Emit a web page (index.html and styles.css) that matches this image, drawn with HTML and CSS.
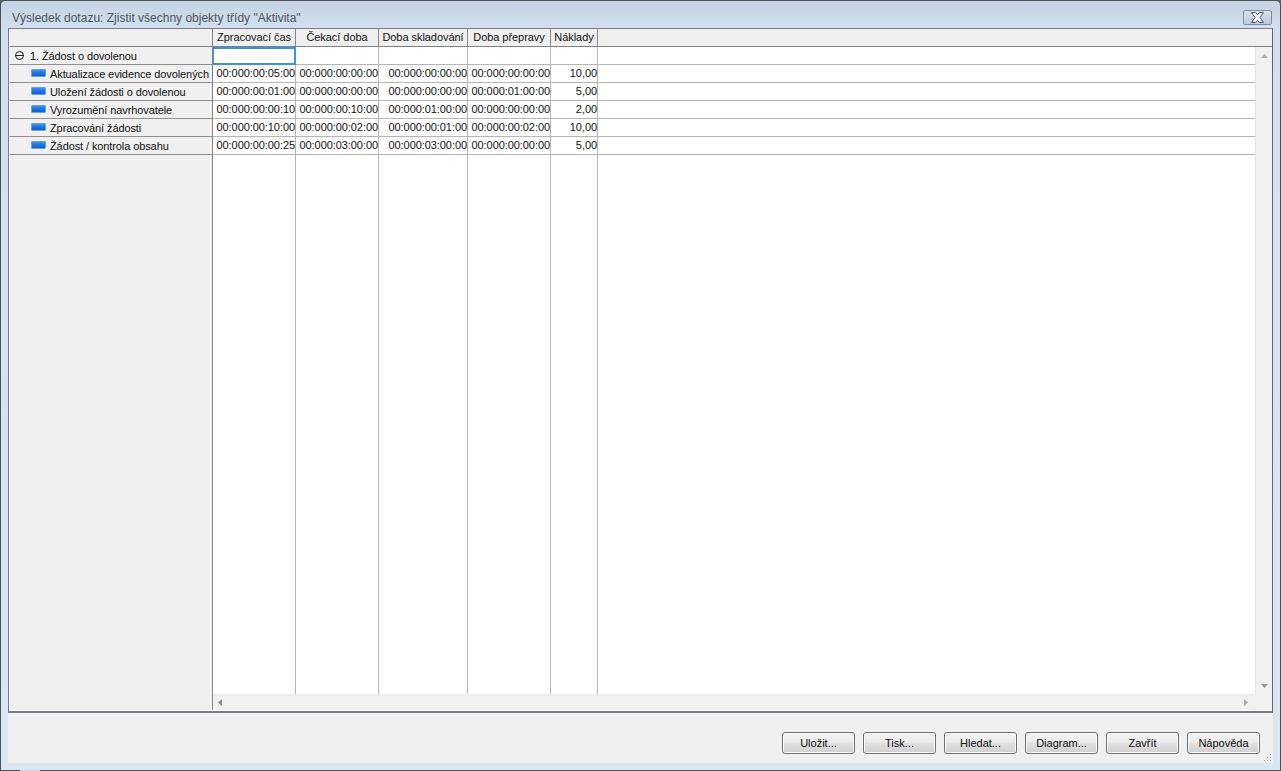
FILE: index.html
```html
<!DOCTYPE html>
<html lang="cs">
<head>
<meta charset="utf-8">
<title>Výsledek dotazu</title>
<link rel="stylesheet" href="styles.css">
</head>
<body>
<div class="window">
  <div class="titlebar">
    <span class="title">Výsledek dotazu: Zjistit všechny objekty třídy "Aktivita"</span>
    <button class="close" aria-label="Zavřít">
      <svg width="17" height="11" viewBox="0 0 17 11"><path d="M2.500 .5h4l2 2 2-2h4l-3.500 5 3.500 5h-4l-2-2-2 2h-4L6 5.500z" fill="#f2f4f6" stroke="#4f5b69" stroke-width="1"/></svg>
    </button>
  </div>
  <div class="grid">
    <div class="table">
      <div class="row head">
        <div class="stub"></div>
        <div class="cell">Zpracovací čas</div>
        <div class="cell">Čekací doba</div>
        <div class="cell">Doba skladování</div>
        <div class="cell">Doba přepravy</div>
        <div class="cell">Náklady</div>
        <div class="cell last"></div>
      </div>
      <div class="row">
        <div class="stub group"><svg class="toggle" width="9" height="9" viewBox="0 0 9 9"><circle cx="4.500" cy="4.500" r="4" fill="none" stroke="#222"/><path d="M0 4.500h9" stroke="#222"/></svg>1. Žádost o dovolenou</div>
        <div class="cell selected"></div>
        <div class="cell"></div><div class="cell"></div><div class="cell"></div><div class="cell"></div>
        <div class="cell last"></div>
      </div>
      <div class="row">
        <div class="stub item"><i class="activity"></i>Aktualizace evidence dovolených</div>
        <div class="cell num">00:000:00:05:00</div><div class="cell num">00:000:00:00:00</div><div class="cell num">00:000:00:00:00</div><div class="cell num">00:000:00:00:00</div><div class="cell num">10,00</div><div class="cell last"></div>
      </div>
      <div class="row">
        <div class="stub item"><i class="activity"></i>Uložení žádosti o dovolenou</div>
        <div class="cell num">00:000:00:01:00</div><div class="cell num">00:000:00:00:00</div><div class="cell num">00:000:00:00:00</div><div class="cell num">00:000:01:00:00</div><div class="cell num">5,00</div><div class="cell last"></div>
      </div>
      <div class="row">
        <div class="stub item"><i class="activity"></i>Vyrozumění navrhovatele</div>
        <div class="cell num">00:000:00:00:10</div><div class="cell num">00:000:00:10:00</div><div class="cell num">00:000:01:00:00</div><div class="cell num">00:000:00:00:00</div><div class="cell num">2,00</div><div class="cell last"></div>
      </div>
      <div class="row">
        <div class="stub item"><i class="activity"></i>Zpracování žádosti</div>
        <div class="cell num">00:000:00:10:00</div><div class="cell num">00:000:00:02:00</div><div class="cell num">00:000:00:01:00</div><div class="cell num">00:000:00:02:00</div><div class="cell num">10,00</div><div class="cell last"></div>
      </div>
      <div class="row">
        <div class="stub item"><i class="activity"></i>Žádost / kontrola obsahu</div>
        <div class="cell num">00:000:00:00:25</div><div class="cell num">00:000:03:00:00</div><div class="cell num">00:000:03:00:00</div><div class="cell num">00:000:00:00:00</div><div class="cell num">5,00</div><div class="cell last"></div>
      </div>
      <div class="row filler">
        <div class="stub"></div>
        <div class="cell"></div><div class="cell"></div><div class="cell"></div><div class="cell"></div><div class="cell"></div>
        <div class="cell last"></div>
      </div>
      <div class="row hbar">
        <div class="stub"></div>
        <div class="hscroll">
          <svg width="4" height="7" viewBox="0 0 4 7"><path d="M4 0v7L0 3.500z" fill="#8a8a8a"/></svg>
          <svg width="4" height="7" viewBox="0 0 4 7"><path d="M0 0v7l4-3.500z" fill="#ababab"/></svg>
        </div>
      </div>
    </div>
    <div class="vscroll">
      <div class="head-corner"></div>
      <div class="vtrack">
        <svg width="7" height="4" viewBox="0 0 7 4"><path d="M0 4h7L3.500 0z" fill="#b0b0b0"/></svg>
        <svg width="7" height="4" viewBox="0 0 7 4"><path d="M0 0h7L3.500 4z" fill="#9a9a9a"/></svg>
      </div>
      <div class="corner"></div>
    </div>
  </div>
  <div class="footer">
    <button class="btn">Uložit...</button>
    <button class="btn">Tisk...</button>
    <button class="btn">Hledat...</button>
    <button class="btn">Diagram...</button>
    <button class="btn">Zavřít</button>
    <button class="btn">Nápověda</button>
    <svg class="grip" width="8" height="8" viewBox="0 0 8 8"><path d="M6 0h1v1H6zM3 3h1v1H3zM6 3h1v1H6zM0 6h1v1H0zM3 6h1v1H3zM6 6h1v1H6z" fill="#a8a8a8"/></svg>
  </div>
  <div class="edge-glint"></div>
</div>
</body>
</html>
```
FILE: styles.css
```css
* { box-sizing: border-box; }
html, body { margin: 0; height: 100%; background: #5d6468; overflow: hidden; }
body { font: 11px "Liberation Sans", Arial, sans-serif; color: #111; }

.window {
  position: relative;
  width: 1281px;
  height: 771px;
  display: flex;
  flex-direction: column;
  padding: 0 7px 7px;
  border: 1px solid #4b5157;
  border-radius: 5px 5px 0 0;
  background: linear-gradient(#c3d3e3 0, #d3e1ef 30px, #d9e6f3 100%);
}
.edge-glint {
  position: absolute;
  left: 19px;
  bottom: -1px;
  width: 20px;
  height: 1px;
  background: #b9d4e6;
}

.titlebar {
  height: 27px;
  flex: none;
  display: flex;
  align-items: center;
  justify-content: space-between;
  padding: 7px 1px 0 4px;
}
.title { font-size: 12px; color: #4d5660; }
.close {
  width: 29px;
  height: 15px;
  padding: 0;
  margin-top: -1px;
  display: flex;
  align-items: center;
  justify-content: center;
  border: 1px solid #7d8ea1;
  border-radius: 2px;
  background: linear-gradient(#d5e0ea, #bccbda);
}

.grid {
  flex: 0 0 685px;
  display: flex;
  border: 1px solid #7c7c86;
  border-right-color: #5f6670;
  border-bottom: 2px solid #7c7c86;
  box-shadow: inset 0 -1px 0 #fff;
  background: #fff;
}
.table { flex: 1; display: flex; flex-direction: column; min-width: 0; }

.row {
  display: grid;
  grid-template-columns: 204px 83px 83px 89px 83px 47px 1fr;
  height: 18px;
  flex: none;
}
.stub {
  background: #f0f0f0;
  border-left: 1px solid #fff;
  border-right: 1px solid #828282;
  border-bottom: 1px solid #8f8f8f;
  display: flex;
  align-items: center;
  white-space: nowrap;
  overflow: hidden;
  letter-spacing: -0.1px;
}
.group { padding-left: 5px; }
.toggle { margin-right: 6px; flex: none; }
.item { padding-left: 21px; }
.activity {
  width: 15px;
  height: 8px;
  margin: -2px 4px 0 0;
  flex: none;
  border: 1px solid #6e9fd6;
  border-radius: 1px;
  background: linear-gradient(#3f93ee 0, #1a72e2 50%, #0f5fd0 100%);
}

.cell {
  border-right: 1px solid #b5b5b5;
  border-bottom: 1px solid #b5b5b5;
  white-space: nowrap;
  overflow: hidden;
  line-height: 17px;
  padding: 0;
}
.num { text-align: right; letter-spacing: -0.07px; }
.last { border-right: 0; }
.selected {
  border: 2px solid #3b93e8;
  border-left-width: 1px;
}

.head { background: #f0f0f0; height: 18px; }
.head .stub { border-bottom-color: #808080; }
.head .cell {
  background: #f0f0f0;
  text-align: center;
  letter-spacing: -0.05px;
  border-right-color: #8a8a8a;
  border-bottom-color: #808080;
}

.filler { flex: 1; height: auto; }
.filler .stub, .filler .cell { border-bottom: 0; }

.hbar { height: 17px; grid-template-columns: 204px 1fr; }
.hbar .stub { border-bottom: 0; height: 16px; }
.hscroll {
  height: 16px;
  background: linear-gradient(#e9e9e9, #f1f1f1 20%, #f1f1f1);
  display: flex;
  align-items: center;
  justify-content: space-between;
  padding: 0 7px 0 5px;
}

.vscroll { flex: 0 0 17px; display: flex; flex-direction: column; }
.head-corner { height: 18px; flex: none; background: #f0f0f0; border-bottom: 1px solid #808080; }
.vtrack {
  flex: 1;
  background: #f1f1f1;
  border-left: 1px solid #e4e4e4;
  display: flex;
  flex-direction: column;
  justify-content: space-between;
  align-items: center;
  padding: 7px 0 7px;
}
.corner { height: 16px; flex: none; background: #f1f1f1; }

.footer {
  position: relative;
  flex: 1;
  background: #f0f0f0;
  display: flex;
  justify-content: flex-end;
  align-items: flex-start;
  gap: 8px;
  padding: 19px 13px 0 0;
}
.btn {
  width: 73px;
  height: 22px;
  padding: 0;
  font: 11px "Liberation Sans", Arial, sans-serif;
  color: #111;
  border: 1px solid #707070;
  border-radius: 3px;
  background: linear-gradient(#f4f4f4 0, #ebebeb 45%, #dedede 55%, #d0d0d0 100%);
  box-shadow: inset 0 0 0 1px #fbfbfb;
}
.grip { position: absolute; right: 1px; bottom: 1px; }
```
